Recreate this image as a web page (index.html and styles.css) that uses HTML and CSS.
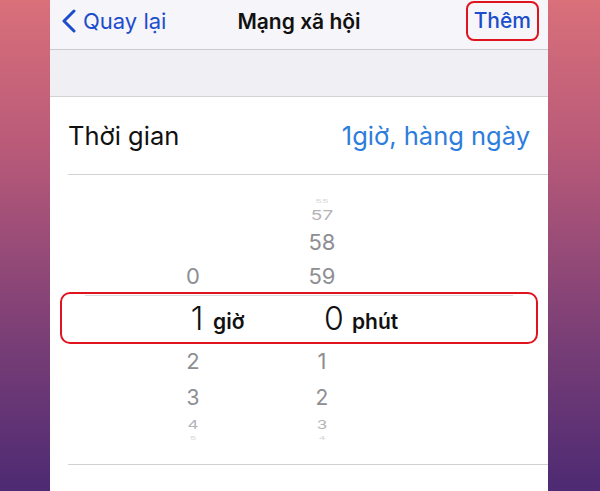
FILE: index.html
```html
<!DOCTYPE html>
<html lang="vi">
<head>
    <meta charset="UTF-8">
    <meta name="viewport" content="width=device-width, initial-scale=1.0">
    <title>Mạng xã hội</title>
    <link rel="stylesheet" href="styles.css">
</head>
<body>
    <div class="phone">
        <div class="navbar">
            <a class="back" href="#">
                <svg class="chevron" width="16" height="24" viewBox="0 0 16 24">
                    <path d="M13 2 L3 12 L13 22" fill="none" stroke="currentColor" stroke-width="3" stroke-linecap="round" stroke-linejoin="round"/>
                </svg>
                <span>Quay lại</span>
            </a>
            <div class="nav-title">Mạng xã hội</div>
            <a class="nav-action" href="#">Thêm</a>
        </div>

        <div class="spacer"></div>

        <div class="cell">
            <div class="cell-inner">
                <span class="cell-label">Thời gian</span>
                <span class="cell-value">1giờ, hàng ngày</span>
            </div>
        </div>

        <!-- bộ chọn giờ / phút -->
        <div class="picker">
            <div class="row r-cut-top"><span></span><span></span><span></span><span class="num faint">55</span></div>
            <div class="row r-far-top"><span></span><span></span><span></span><span class="num light">57</span></div>
            <div class="row r-near-top2"><span></span><span></span><span></span><span class="num">58</span></div>
            <div class="row r-near-top"><span></span><span class="num">0</span><span></span><span class="num">59</span></div>

            <div class="highlight">
                <div class="row sel">
                    <span></span>
                    <span class="num">1</span>
                    <span class="unit unit-h">giờ</span>
                    <span class="num">0</span>
                    <span class="unit unit-m">phút</span>
                </div>
            </div>

            <div class="row r-near-bot"><span></span><span class="num">2</span><span></span><span class="num">1</span></div>
            <div class="row r-mid-bot"><span></span><span class="num">3</span><span></span><span class="num">2</span></div>
            <div class="row r-far-bot"><span></span><span class="num light">4</span><span></span><span class="num light">3</span></div>
            <div class="row r-cut-bot"><span></span><span class="num faint">5</span><span></span><span class="num faint">4</span></div>
        </div>

        <div class="cell-sep"></div>
    </div>
</body>
</html>
```

FILE: styles.css
```css
html, body {
    margin: 0;
    height: 491px;
}

body {
    font-family: "Inter", "Noto Sans", sans-serif;
    background: linear-gradient(180deg, #d9707a 0%, #b95a79 30%, #7b3f76 68%, #4d2a73 100%);
    overflow: hidden;
}

.phone {
    margin-left: 50px;
    width: 498px;
    height: 491px;
    background: #fff;
}

/* thanh điều hướng */
.navbar {
    height: 49px;
    box-sizing: border-box;
    padding: 0 9px 7px 11px;
    background: #f6f5f9;
    display: flex;
    align-items: center;
    position: relative;
}

.back {
    display: flex;
    align-items: center;
    gap: 6px;
    color: #1c4dcc;
    text-decoration: none;
    font-size: 22px;
}

.chevron {
    display: block;
}

.nav-title {
    position: absolute;
    left: 0;
    right: 0;
    text-align: center;
    font-size: 21px;
    font-weight: 600;
    color: #111;
    pointer-events: none;
}

.nav-action {
    margin-left: auto;
    color: #1c4dcc;
    text-decoration: none;
    font-size: 21px;
    font-weight: 500;
    padding: 5px 6px 6px;
    border: 2px solid #e0141e;
    border-radius: 8px;
}

.spacer {
    height: 46px;
    background: #efeff4;
    border-top: 1px solid #cbcbcf;
    border-bottom: 1px solid #d3d3d7;
}

.cell {
    padding-left: 18px;
}

.cell-inner {
    height: 77px;
    display: flex;
    align-items: center;
    justify-content: space-between;
    padding-right: 18px;
    border-bottom: 1px solid #d2d2d6;
}

.cell-label {
    font-size: 25.5px;
    color: #111;
}

.cell-value {
    font-size: 25.5px;
    color: #2d7ddc;
}

/* bánh xe chọn */
.picker {
    padding-top: 21px;
    height: 268px;
}

.row {
    display: grid;
    grid-template-columns: 123px 40px 89px 40px 1fr;
    align-items: center;
    font-size: 22px;
    line-height: 1;
    color: #8e8e93;
}

.num {
    text-align: center;
}

.light {
    color: #b4b4b8;
    transform: scaleY(0.72);
}

.faint {
    font-size: 11px;
    color: #d6d6da;
    transform: scaleY(0.45);
}

.r-cut-top { height: 10px; }
.r-far-top { height: 18px; font-size: 19px; }
.r-near-top2 { height: 36px; }
.r-near-top { height: 32px; }
.r-near-bot { height: 33px; }
.r-mid-bot { height: 40px; font-size: 21px; }
.r-far-bot { height: 16px; font-size: 17px; }
.r-cut-bot { height: 8px; }

.highlight {
    margin: 0 10px;
    padding: 1px 23px 0;
    border: 2px solid #e0141e;
    border-radius: 10px;
}

.row.sel {
    grid-template-columns: 96px 32px 105px 32px 1fr;
    height: 46px;
    border-top: 1px solid #dcdce0;
    color: #111;
    font-size: 32px;
    font-weight: 300;
}

.unit {
    font-size: 21px;
    font-weight: 600;
    color: #111;
    padding-top: 4px;
}

.unit-m { padding-left: 2px; }

.cell-sep {
    margin-left: 18px;
    border-top: 1px solid #d2d2d6;
}
```
